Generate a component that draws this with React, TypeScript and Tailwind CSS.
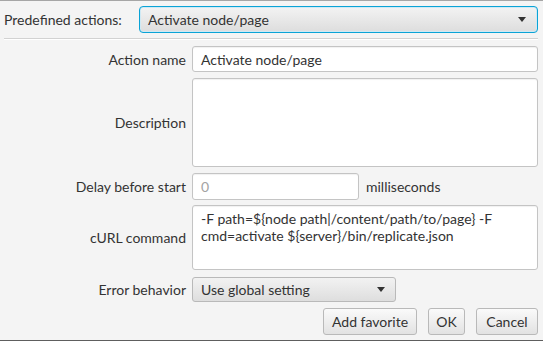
import React from "react";

const font = { fontFamily: "Lato, 'Open Sans', sans-serif" };

function Arrow() {
  return (
    <svg width="8" height="5" viewBox="0 0 8 5" className="shrink-0">
      <polygon points="0,0 8,0 4,5" fill="#333" />
    </svg>
  );
}

function Label({ children }: { children: React.ReactNode }) {
  return <div className="w-[187px] pr-[1px] flex items-center justify-end text-[14px] text-[#333]">{children}</div>;
}

const fieldCls =
  "bg-white border border-[#c4c4c4] rounded-[3px] shadow-[inset_0_1px_1px_rgba(0,0,0,0.06)]";
const btnCls =
  "h-[27px] border border-[#b9b9b9] rounded-[3px] bg-gradient-to-b from-[#fafafa] to-[#e2e2e2] text-[14px] text-[#333] flex items-center justify-center";

export default function App() {
  return (
    <div
      style={font}
      className="w-[543px] h-[341px] bg-[#f4f4f4] border-t border-t-[#a6a6a6] border-b border-b-[#5e5e5e] flex flex-col text-[14px] text-[#333] overflow-hidden"
    >
      <div className="flex items-center pt-[5px] pl-[4px] pr-[5px]">
        <div className="w-[135px]">Predefined actions:</div>
        <div className="flex-1 h-[27px] rounded-[4px] border border-[#0aa3d6] p-[1px] bg-[#cfe9f4]">
          <div className="h-full rounded-[2px] bg-gradient-to-b from-[#f2f2f2] to-[#dedede] flex items-center pl-[7px] pr-[10px]">
            <span className="flex-1">Activate node/page</span>
            <Arrow />
          </div>
        </div>
      </div>
      <div className="ml-[4px] mr-[5px] mt-[5px] h-[2px] border-t border-t-[#d2d2d2] border-b border-b-white" />
      <div className="flex flex-col pt-[6px] pr-[5px]">
        <div className="flex gap-[5px] h-[26px]">
          <Label>Action name</Label>
          <div className={`flex-1 ${fieldCls} flex items-center pl-[8px]`}>Activate node/page</div>
        </div>
        <div className="flex gap-[5px] h-[89px] mt-[6px]">
          <Label>Description</Label>
          <div className={`flex-1 ${fieldCls}`} />
        </div>
        <div className="flex gap-[5px] h-[27px] mt-[6px]">
          <Label>Delay before start</Label>
          <div className={`w-[167px] ${fieldCls} flex items-center pl-[8px] text-[#a3a3a3]`}>0</div>
          <div className="flex items-center pl-[2px]">milliseconds</div>
        </div>
        <div className="flex gap-[5px] h-[65px] mt-[5px]">
          <Label>cURL command</Label>
          <div className={`flex-1 ${fieldCls} pl-[8px] pt-[4px] leading-[17px]`}>
            <div>-F path=${"{"}node path|/content/path/to/page{"}"} -F</div>
            <div>cmd=activate ${"{"}server{"}"}/bin/replicate.json</div>
          </div>
        </div>
        <div className="flex gap-[5px] h-[25px] mt-[7px]">
          <Label>Error behavior</Label>
          <div className="w-[204px] h-full border border-[#b9b9b9] rounded-[3px] bg-gradient-to-b from-[#f2f2f2] to-[#dedede] flex items-center pl-[8px] pr-[10px]">
            <span className="flex-1">Use global setting</span>
            <Arrow />
          </div>
        </div>
        <div className="flex justify-end gap-[11px] mt-[6px]">
          <div className={`${btnCls} w-[94px]`}>Add favorite</div>
          <div className={`${btnCls} w-[37px]`}>OK</div>
          <div className={`${btnCls} w-[62px]`}>Cancel</div>
        </div>
      </div>
    </div>
  );
}
